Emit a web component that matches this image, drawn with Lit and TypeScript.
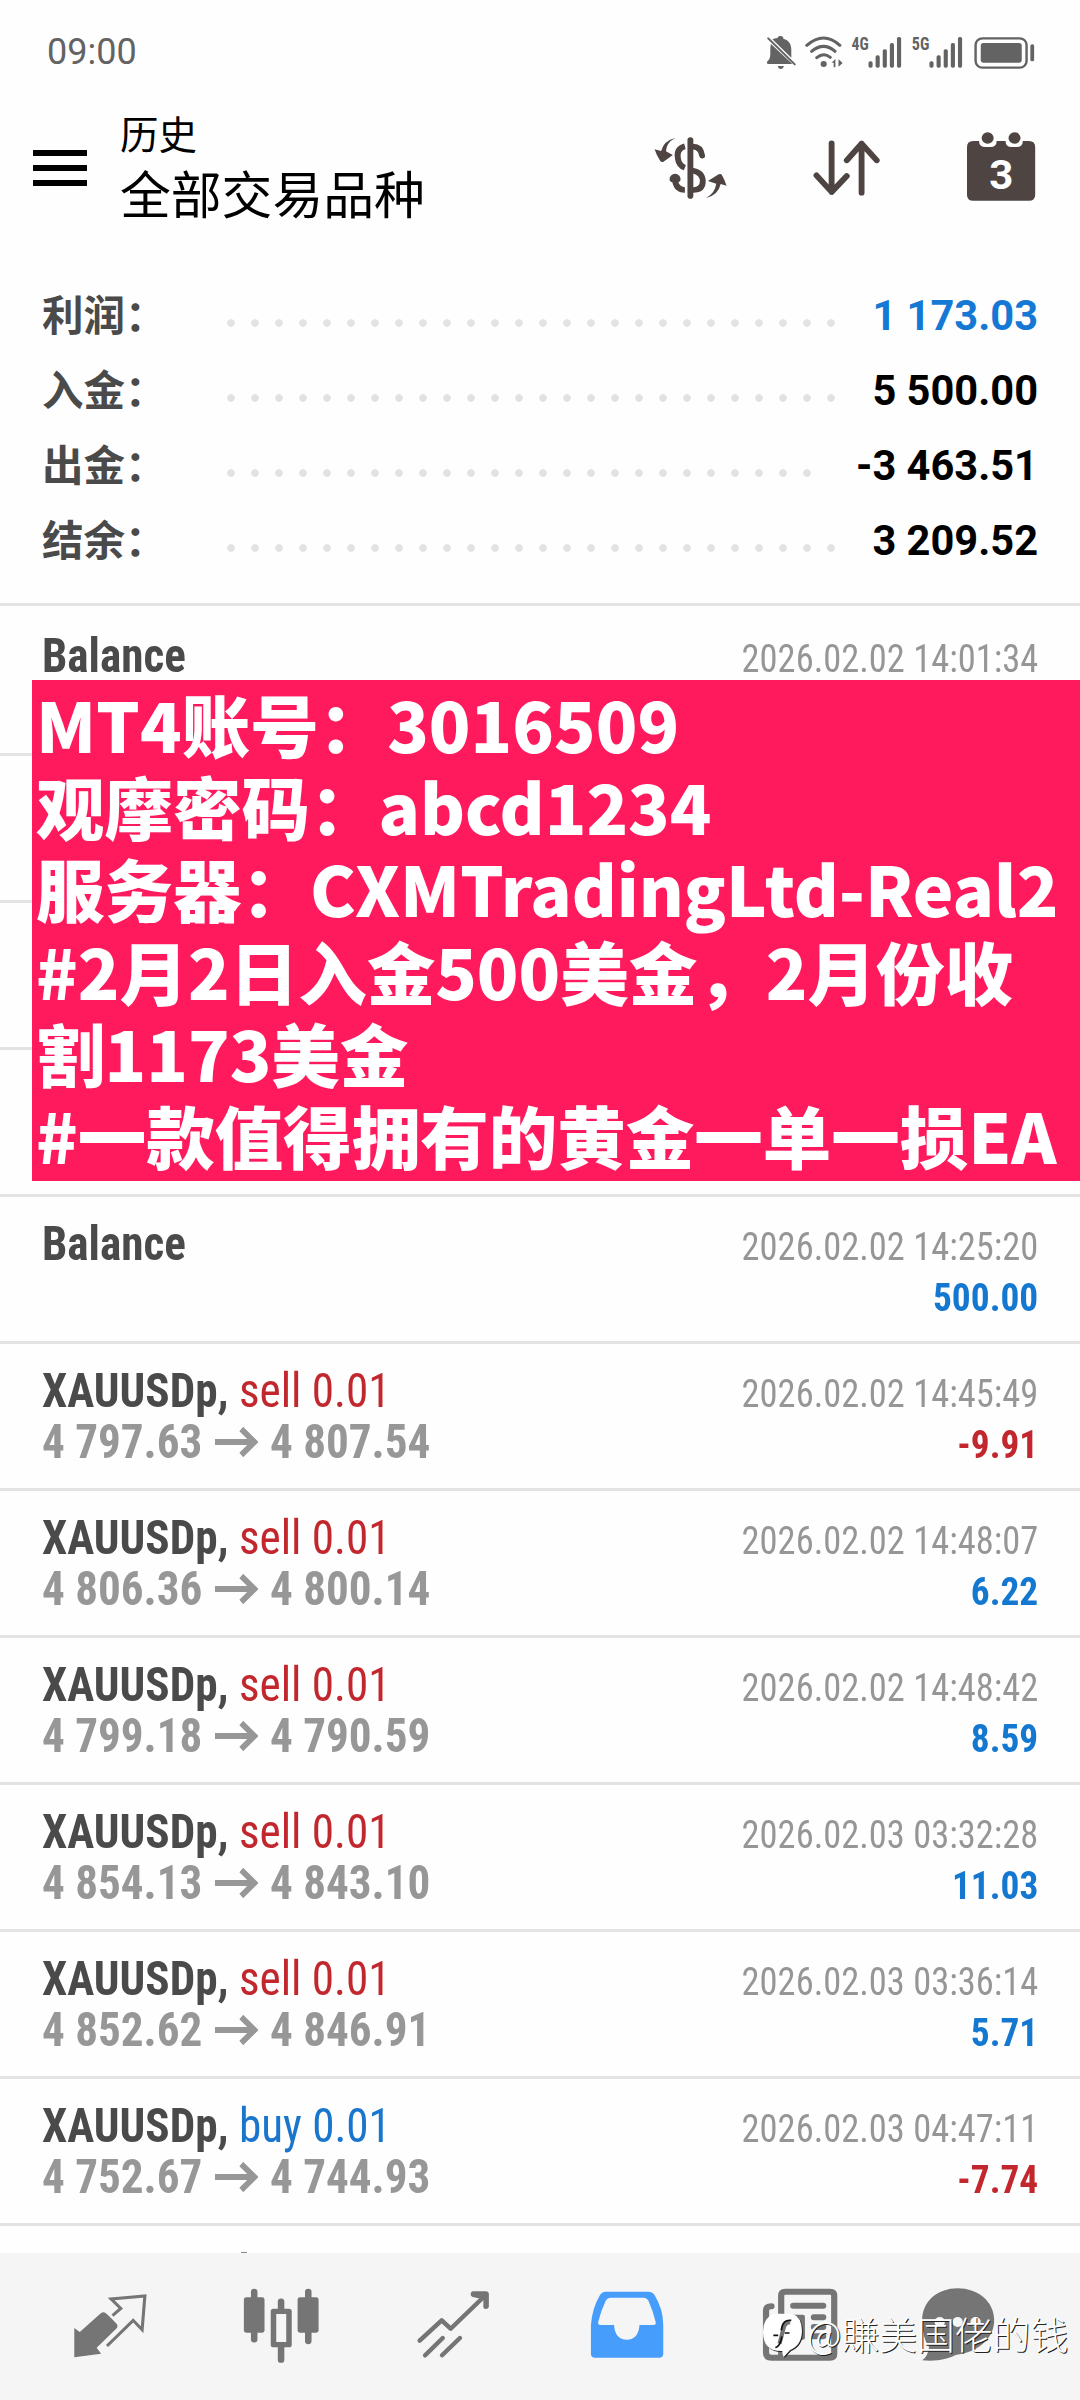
import { LitElement, html, svg, css } from "lit";
import { customElement, property } from "lit/decorators.js";

interface Deal {
  side?: "sell" | "buy";
  from?: string;
  to?: string;
  time?: string;
  profit?: string;
}

const SUMMARY = [
  { label: "利润：", value: "1 173.03", accent: true },
  { label: "入金：", value: "5 500.00" },
  { label: "出金：", value: "-3 463.51" },
  { label: "结余：", value: "3 209.52" },
];

const DEALS: Deal[] = [
  { time: "2026.02.02 14:25:20", profit: "500.00" },
  { side: "sell", from: "4 797.63", to: "4 807.54", time: "2026.02.02 14:45:49", profit: "-9.91" },
  { side: "sell", from: "4 806.36", to: "4 800.14", time: "2026.02.02 14:48:07", profit: "6.22" },
  { side: "sell", from: "4 799.18", to: "4 790.59", time: "2026.02.02 14:48:42", profit: "8.59" },
  { side: "sell", from: "4 854.13", to: "4 843.10", time: "2026.02.03 03:32:28", profit: "11.03" },
  { side: "sell", from: "4 852.62", to: "4 846.91", time: "2026.02.03 03:36:14", profit: "5.71" },
  { side: "buy", from: "4 752.67", to: "4 744.93", time: "2026.02.03 04:47:11", profit: "-7.74" },
];

const NOTE = [
  "MT4账号：3016509",
  "观摩密码：abcd1234",
  "服务器：CXMTradingLtd-Real2",
  "#2月2日入金500美金，2月份收",
  "割1173美金",
  "#一款值得拥有的黄金一单一损EA",
];

@customElement("status-bar")
class StatusBar extends LitElement {
  static styles = css`
    :host {
      display: flex;
      justify-content: space-between;
      height: 104px;
      padding: 32px 40px 0 47px;
      box-sizing: border-box;
      color: #636363;
    }
    .time {
      font: 400 36px/41px Roboto, sans-serif;
    }
    svg {
      width: 279px;
      height: 40px;
      display: block;
      fill: #636363;
    }
    .gen {
      font: 700 56px "Roboto Condensed", Roboto, sans-serif;
    }
  `;
  render() {
    const bars = (x: number) =>
      [0, 1, 2, 3, 4].map(
        (i) => svg`<rect x=${x + i * 20.7} y=${183 - i * 18.3} width="12" height=${19 + i * 18.3} rx="5"/>`
      );
    return html`
      <span class="time">09:00</span>
      <svg viewBox="640 95 810 120" preserveAspectRatio="none">
        <path d="M697 107c5 0 8 3 8 8 16 4 23 17 23 33v24l-55-55c4-2 8-3 15-4 1-4 4-6 9-6zM669 131l62 60h-70c-4 0-5-5-2-9 8-7 8-14 8-28 0-10 0-16 2-23zM689 197h17c0 12-17 12-17 0z"/>
        <path d="M661 114l77 78" stroke="#636363" stroke-width="6" stroke-linecap="round"/>
        <g fill="none" stroke="#636363" stroke-width="9" stroke-linecap="round">
          <path d="M773 135q49-44 96 0M787 153q35-30 68 0M802 172q20-17 39-1"/>
        </g>
        <circle cx="822" cy="191" r="9"/>
        <path d="M845 187l11-11v25h-5v-14zM865 177l12 11-12 11z"/>
        <text class="gen" x="903" y="150" textLength="50" lengthAdjust="spacingAndGlyphs">4G</text>
        ${bars(952)}
        <text class="gen" x="1078" y="150" textLength="51" lengthAdjust="spacingAndGlyphs">5G</text>
        ${bars(1129)}
        <rect x="1263" y="114" width="148" height="88" rx="20" fill="none" stroke="#636363" stroke-width="7"/>
        <rect x="1278" y="128" width="119" height="59" rx="8"/>
        <rect x="1422" y="132" width="11" height="51" rx="5"/>
      </svg>
    `;
  }
}

@customElement("top-bar")
class TopBar extends LitElement {
  static styles = css`
    :host {
      display: flex;
      align-items: flex-start;
      height: 166px;
      padding: 0 30px 0 33px;
      box-sizing: border-box;
    }
    .menu {
      display: grid;
      gap: 9px;
      margin-top: 46px;
      width: 54px;
    }
    .menu i {
      height: 6px;
      background: #000;
    }
    .titles {
      flex: 1;
      margin: -2px 0 0 33px;
      color: #000;
      font-family: "Noto Sans CJK SC", sans-serif;
    }
    .sub {
      font-size: 38.5px;
      line-height: 60px;
    }
    .main {
      font-size: 50.8px;
      line-height: 60px;
    }
    svg {
      display: block;
      width: 413px;
      height: 80px;
      margin-top: 24px;
      fill: #4e4543;
    }
    .day {
      font: 700 121px Roboto, sans-serif;
      fill: #fff;
    }
  `;
  render() {
    return html`
      <div class="menu"><i></i><i></i><i></i></div>
      <div class="titles">
        <div class="sub">历史</div>
        <div class="main">全部交易品种</div>
      </div>
      <svg viewBox="280 384 1199 240" preserveAspectRatio="none">
        <path d="M391 414q-26 14-27 40l20 11-27 20q-5 3-9-1-11-17-17-36l19 5q8-31 41-39z"/>
        <path d="M480 594q27-15 30-43l-24-8 31-20q6-3 9 1 9 16 14 33l-17-5q-8 35-43 42z"/>
        <path d="M419 439q-26 7-20 38 3 20 20 26M390 538q3 32 29 32" fill="none" stroke="#4e4543" stroke-width="17"/>
        <path d="M398 538a7 8 0 0 0-15 0M443 440q22 0 26 27M443 512q28 6 28 32t-28 26" fill="none" stroke="#4e4543" stroke-width="17" stroke-linecap="round"/>
        <path d="M435 420v168" stroke="#4e4543" stroke-width="17" stroke-linecap="round"/>
        <path d="M845 430v146M801 526l44 50 44-48M932 578V431M889 481l43-50 44 50" fill="none" stroke="#4e4543" stroke-width="17" stroke-linecap="round" stroke-linejoin="round"/>
        <path d="M1256 423h17q0 18 19 18h14q18 0 18-18h26q0 18 18 18h14q18 0 18-18h18q18 0 18 18v143q0 18-18 18h-162q-18 0-18-18V441q0-18 18-18z"/>
        <circle cx="1298" cy="414" r="17.5"/>
        <circle cx="1376" cy="414" r="17.5"/>
        <text class="day" x="1303" y="567" textLength="70" lengthAdjust="spacingAndGlyphs">3</text>
      </svg>
    `;
  }
}

@customElement("account-summary")
class AccountSummary extends LitElement {
  static styles = css`
    :host {
      display: block;
      height: 336px;
      padding: 8px 42px 0;
      box-sizing: border-box;
      border-bottom: 3px solid #e3e3e3;
    }
    .line {
      display: flex;
      height: 75px;
      align-items: center;
    }
    .label {
      width: 177px;
      margin-top: -4px;
      color: #4a4a4a;
      font: 700 41.5px/75px "Noto Sans CJK SC", sans-serif;
    }
    .dots {
      flex: 1;
      height: 10px;
      margin: 15px 32px 0 0;
      background: radial-gradient(circle at 12px 5px, #e2e2e2 3.4px, transparent 4.2px) 0 0 / 24px 10px repeat-x;
    }
    .value {
      color: #000;
      font: 700 41.6px/75px Roboto, sans-serif;
    }
    .accent {
      color: #1478d4;
    }
  `;
  render() {
    return SUMMARY.map(
      (s) => html`<div class="line">
        <span class="label">${s.label}</span>
        <span class="dots"></span>
        <span class="value ${s.accent ? "accent" : ""}">${s.value}</span>
      </div>`
    );
  }
}

@customElement("deal-row")
class DealRow extends LitElement {
  @property({ attribute: false }) deal: Deal = {};
  static styles = css`
    :host {
      display: grid;
      grid-template-columns: 1fr auto;
      grid-template-rows: 51px 50px;
      align-items: baseline;
      height: 147px;
      padding: 22px 42px 0;
      box-sizing: border-box;
      border-bottom: 3px solid #e3e3e3;
      font: 400 48px/50px "Roboto Condensed", Roboto, sans-serif;
      white-space: pre;
    }
    .title,
    .prices {
      transform: scaleX(0.94);
      transform-origin: left;
    }
    .time,
    .profit {
      transform: scaleX(0.935);
      transform-origin: right;
      font-size: 39px;
      text-align: right;
    }
    .name {
      font-weight: 700;
      color: #4a4a4a;
    }
    .sell {
      color: #c1272d;
    }
    .buy {
      color: #1976cc;
    }
    .time {
      color: #969696;
    }
    .prices {
      font-weight: 700;
      color: #979797;
    }
    .prices svg {
      width: 46px;
      height: 30px;
      margin: 0 13px;
      vertical-align: 1px;
      fill: none;
      stroke: #979797;
      stroke-width: 6;
    }
    .strut {
      display: inline-block;
    }
    .profit {
      transform: scaleX(0.958);
      font-weight: 700;
    }
    .up {
      color: #1478d0;
    }
    .down {
      color: #c1272d;
    }
  `;
  render() {
    const d = this.deal;
    const tone = (d.profit ?? "").startsWith("-") ? "down" : "up";
    return html`
      <span class="title">${d.side
        ? html`<span class="name">XAUUSDp, </span><span class=${d.side}>${d.side} 0.01</span>`
        : html`<span class="name">Balance</span>`}</span>
      <span class="time">${d.time}</span>
      <span class="prices">${d.from
        ? html`${d.from}<svg viewBox="0 0 46 30"><path d="M0 15h42M28 2l14 13-14 13" /></svg>${d.to}`
        : html`<i class="strut"></i>`}</span>
      <span class="profit ${tone}">${d.profit}</span>
    `;
  }
}

@customElement("tab-bar")
class TabBar extends LitElement {
  static styles = css`
    :host {
      display: flex;
      position: relative;
      height: 147px;
      padding: 20px 0 0 24px;
      box-sizing: border-box;
      background: #f5f5f5;
    }
    .tab {
      flex: none;
      width: 172.2px;
      height: 100px;
      fill: #757575;
    }
    .ln {
      fill: none;
      stroke: #757575;
      stroke-linecap: round;
      stroke-linejoin: round;
    }
    .mark {
      position: absolute;
      left: 763px;
      top: 53px;
      display: flex;
      align-items: center;
      color: #fff;
      font: 300 37.8px/54px "Noto Sans CJK SC", sans-serif;
      text-shadow: 1px 1px 0 #222;
      white-space: nowrap;
    }
    .mark svg {
      width: 40px;
      height: 46px;
      margin: 5px 4px 0 0;
      overflow: visible;
      filter: drop-shadow(1px 1px 0 #222);
    }
  `;
  render() {
    return html`
      <svg class="tab" viewBox="70 640 500 300" preserveAspectRatio="none">
        <path d="M302 758q6 0 38 36 4 8-3 14l-56 56 13 18-78 11v-88l16 12 61-56q5-4 9-3z"/>
        <path d="M327 768l24-22-28-28 98-9-8 101-26-28-76 77" class="ln" style="stroke-width:9;stroke-linejoin:miter;stroke-linecap:butt"/>
      </svg>
      <svg class="tab" viewBox="570 640 500 300" preserveAspectRatio="none">
        <rect x="709" y="713" width="60" height="106" rx="7"/>
        <rect x="865" y="713" width="61" height="106" rx="7"/>
        <path class="ln" style="stroke-width:19" d="M739 697v142M896 697v147M817 726v20M817 860v40"/>
        <rect class="ln" style="stroke-width:16" x="795" y="755" width="45" height="100"/>
      </svg>
      <svg class="tab" viewBox="1070 640 500 300" preserveAspectRatio="none">
        <path class="ln" style="stroke-width:13" d="M1220 843l64-61 26 25 98-97M1236 887l51-52M1285 887l52-52"/>
        <path d="M1374 695h38q9 0 9 9v38q-2 6-9 6t-7-6v-23l-31-7q-6-2-6-8 0-8 6-9z"/>
      </svg>
      <svg class="tab" viewBox="2 640 500 300" preserveAspectRatio="none">
        <path fill="#469dfc" fill-rule="evenodd" d="M190 696h125q11 0 17 11 25 42 25 90v85q0 12-12 12H159q-12 0-12-12v-85q3-50 26-90 6-11 17-11zM205 714q-10 0-15 9-14 30-22 64-2 9 8 9h38q3 44 37 44t37-44h40q9 0 7-9-8-34-21-64-5-9-15-9z"/>
      </svg>
      <svg class="tab" viewBox="502 640 500 300" preserveAspectRatio="none">
        <path class="ln" style="stroke-width:18" d="M700 885V708q0-12 12-12h130q12 0 12 12v174q0 12-12 12H672q-16 0-16-15V752q0-12 16-12M700 885q0 9-10 9"/>
        <path class="ln" style="stroke-width:18" d="M735 738h87M795 773h27M795 802h27M795 830h27"/>
        <path fill-rule="evenodd" d="M732 765h31q6 0 6 6v63q0 6-6 6h-31q-6 0-6-6v-63q0-6 6-6zM744 783v40h7v-40z"/>
      </svg>
      <svg class="tab" viewBox="1002 640 500 300" preserveAspectRatio="none">
        <path d="M1213 686c60 0 106 41 106 95 0 56-46 96-112 105-22 12-54 20-97 16q17-12 20-40-20-28-20-81c0-54 43-95 103-95z"/>
        <g fill="#f5f5f5"><circle cx="1161" cy="787" r="15"/><circle cx="1213" cy="787" r="15"/><circle cx="1265" cy="787" r="15"/></g>
      </svg>
      <div class="mark">
        <svg viewBox="645 778 116 138" preserveAspectRatio="none">
          <path fill="#fff" d="M676 780h54q28 10 28 52 0 42-35 58l-18 20q-5-10-4-18-56 2-56-58 0-42 31-54z"/>
          <path d="M724 806q-16 0-20 20l-11 44" fill="none" stroke="#757575" stroke-width="12"/>
          <path d="M727 800q-22-3-27 20l-2 10M675 845h14M708 838h14M700 848q-5 30-19 34" fill="none" stroke="#111" stroke-width="5"/>
        </svg>
        <span>@賺美国佬的钱</span>
      </div>
    `;
  }
}

@customElement("app-root")
class AppRoot extends LitElement {
  static styles = css`
    :host {
      display: flex;
      flex-direction: column;
      width: 1080px;
      height: 2400px;
      overflow: hidden;
      background: #fefefe;
    }
    .list {
      position: relative;
      flex: 1;
      padding-top: 3px;
      overflow: hidden;
    }
    .blank {
      height: 147px;
      box-sizing: border-box;
      border-bottom: 3px solid #e3e3e3;
    }
    .note {
      position: absolute;
      left: 32px;
      right: 0;
      top: 74px;
      height: 501px;
      padding: 3px 0 0 4px;
      box-sizing: border-box;
      background: #ff1a5e;
      color: #fff;
      font: 900 68.5px/82.2px "Noto Sans CJK SC", sans-serif;
      white-space: nowrap;
    }
    .peek {
      width: 6px;
      height: 1px;
      margin: 26px 0 0 241px;
      background: #8a8a8a;
    }
  `;
  render() {
    return html`
      <status-bar></status-bar>
      <top-bar></top-bar>
      <account-summary></account-summary>
      <div class="list">
        <deal-row .deal=${{ time: "2026.02.02 14:01:34" }}></deal-row>
        <div class="blank"></div>
        <div class="blank"></div>
        <div class="blank"></div>
        ${DEALS.map((d) => html`<deal-row .deal=${d}></deal-row>`)}
        <div class="peek"></div>
        <div class="note">${NOTE.map((l) => html`<div>${l}</div>`)}</div>
      </div>
      <tab-bar></tab-bar>
    `;
  }
}
